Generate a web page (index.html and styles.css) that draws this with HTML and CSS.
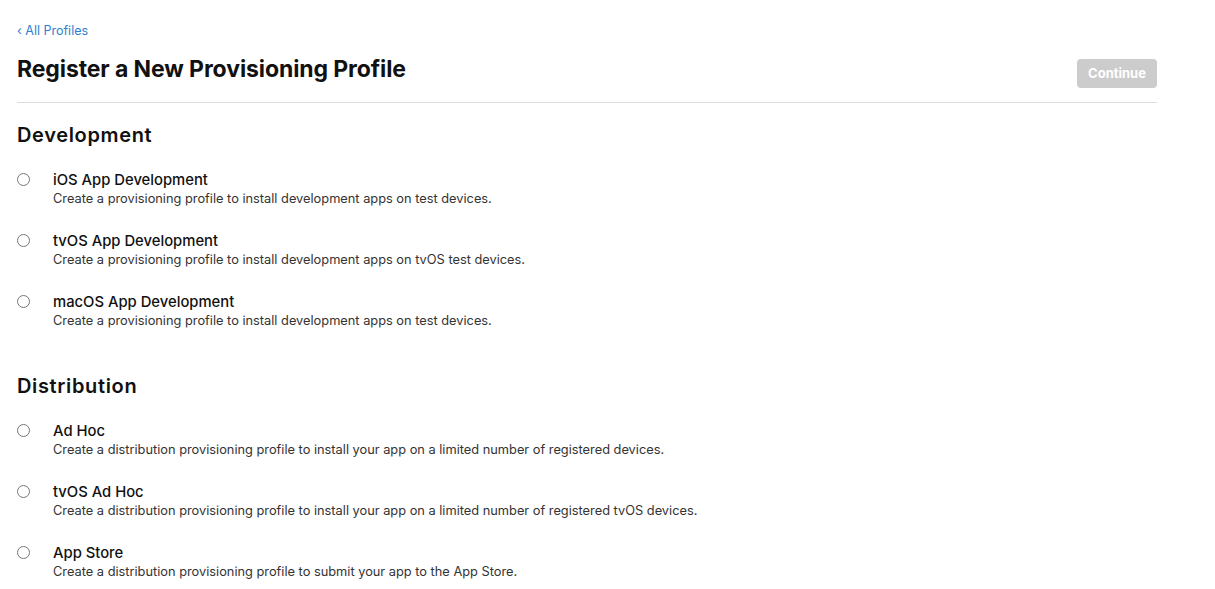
FILE: index.html
```html
<!DOCTYPE html>
<html lang="en">
<head>
<meta charset="utf-8">
<title>Register a New Provisioning Profile</title>
<link rel="stylesheet" href="styles.css">
</head>
<body>
<div class="page">
  <a class="back" href="#">&lsaquo; All Profiles</a>
  <div class="header">
    <h1 class="title">Register a New Provisioning Profile</h1>
    <button class="continue" disabled>Continue</button>
  </div>
  <section class="group">
    <h2 class="group-title">Development</h2>
    <label class="option">
      <input type="radio" name="p" class="radio">
      <span class="option-text">
        <span class="option-name">iOS App Development</span>
        <span class="option-desc">Create a provisioning profile to install development apps on test devices.</span>
      </span>
    </label>
    <label class="option">
      <input type="radio" name="p" class="radio">
      <span class="option-text">
        <span class="option-name">tvOS App Development</span>
        <span class="option-desc">Create a provisioning profile to install development apps on tvOS test devices.</span>
      </span>
    </label>
    <label class="option">
      <input type="radio" name="p" class="radio">
      <span class="option-text">
        <span class="option-name">macOS App Development</span>
        <span class="option-desc">Create a provisioning profile to install development apps on test devices.</span>
      </span>
    </label>
  </section>
  <section class="group">
    <h2 class="group-title">Distribution</h2>
    <label class="option">
      <input type="radio" name="p" class="radio">
      <span class="option-text">
        <span class="option-name">Ad Hoc</span>
        <span class="option-desc">Create a distribution provisioning profile to install your app on a limited number of registered devices.</span>
      </span>
    </label>
    <label class="option">
      <input type="radio" name="p" class="radio">
      <span class="option-text">
        <span class="option-name">tvOS Ad Hoc</span>
        <span class="option-desc">Create a distribution provisioning profile to install your app on a limited number of registered tvOS devices.</span>
      </span>
    </label>
    <label class="option">
      <input type="radio" name="p" class="radio">
      <span class="option-text">
        <span class="option-name">App Store</span>
        <span class="option-desc">Create a distribution provisioning profile to submit your app to the App Store.</span>
      </span>
    </label>
  </section>
</div>
</body>
</html>
```
FILE: styles.css
```css
* { box-sizing: border-box; }
html, body { margin: 0; padding: 0; background: #fff; }
body {
  font-family: Inter, "Liberation Sans", sans-serif;
  color: #111;
}
.page {
  width: 1140px;
  margin-left: 17px;
  padding-top: 23px;
}
.back {
  display: block;
  font-size: 12.5px;
  line-height: 16px;
  color: #2d7fd0;
  text-decoration: none;
}
.header {
  display: flex;
  justify-content: space-between;
  align-items: flex-start;
  padding-top: 14px;
  padding-bottom: 14px;
  border-bottom: 1px solid #dcdcdc;
}
.title {
  margin: 0;
  font-size: 23px;
  line-height: 32px;
  font-weight: 700;
  letter-spacing: -0.1px;
  color: #111;
}
.continue {
  margin-top: 6px;
  width: 80px;
  height: 29px;
  border: none;
  border-radius: 4px;
  background: #cccccc;
  color: #fff;
  font-family: inherit;
  font-size: 13px;
  font-weight: 700;
  padding: 0 0 2px;
}
.group { padding-top: 20px; }
.group + .group { padding-top: 20px; }
.group-title {
  margin: 0 0 24px;
  font-size: 20px;
  line-height: 24px;
  font-weight: 600;
  letter-spacing: 0.65px;
  color: #111;
}
.option {
  display: flex;
  align-items: flex-start;
  height: 61px;
}
.radio {
  margin: 2px 0 0 0;
  width: 13px;
  height: 13px;
  flex: none;
}
.option-text {
  display: flex;
  flex-direction: column;
  margin-left: 23px;
}
.option-name {
  font-size: 14.8px;
  line-height: 18px;
  font-weight: 500;
  color: #111;
}
.option-desc {
  margin-top: 1px;
  font-size: 12.8px;
  line-height: 18px;
  color: #333;
}
```
